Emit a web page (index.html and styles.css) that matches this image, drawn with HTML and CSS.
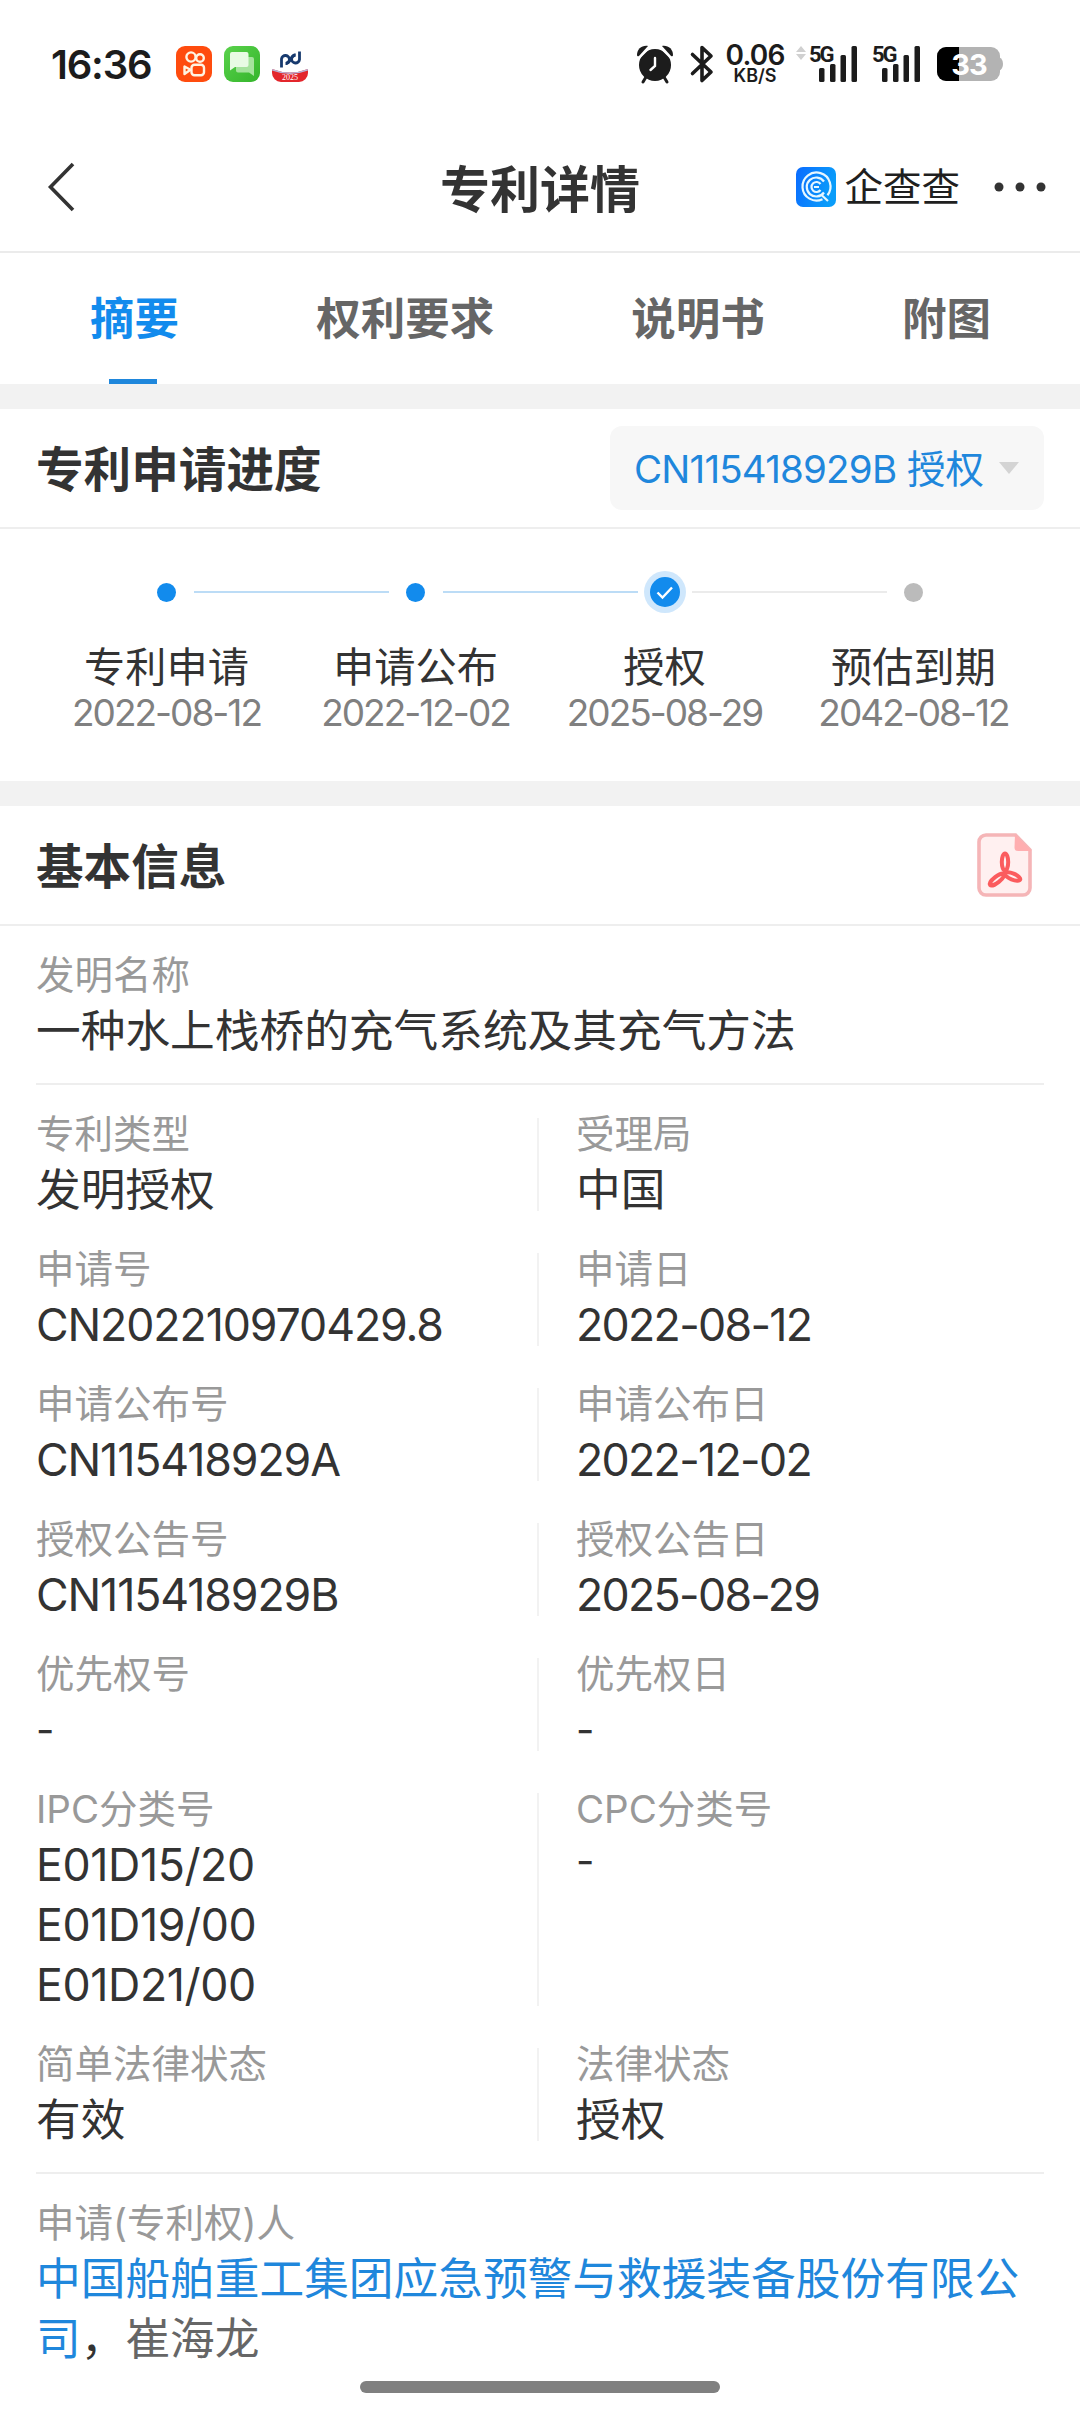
FILE: index.html
```html
<!DOCTYPE html>
<html lang="zh-CN">
<head>
  <meta charset="UTF-8" />
  <title>专利详情</title>
  <meta name="viewport" content="width=device-width, initial-scale=1.0" />
  <link rel="stylesheet" href="styles.css">
</head>
<body>
  <!-- Status bar -->
  <div class="status">
    <span class="time">16:36</span>
    <div class="apps">
      <svg width="36" height="36" viewBox="0 0 36 36">
        <rect width="36" height="36" rx="9" fill="#ff4c0e"/>
        <g fill="none" stroke="#fff4e2" stroke-width="2.4">
          <circle cx="15" cy="11" r="4.6"/>
          <circle cx="24" cy="12" r="3.8"/>
          <rect x="15.500" y="18.800" width="12.500" height="10.400" rx="3"/>
          <path d="M14.500 23.800 8.500 20.500v7.500z" stroke-linejoin="round"/>
        </g>
      </svg>
      <svg width="36" height="36" viewBox="0 0 36 36">
        <defs>
          <linearGradient id="msg" x1="0" y1="0" x2="1" y2="1">
            <stop offset="0" stop-color="#5ad24c"/>
            <stop offset="1" stop-color="#34b52b"/>
          </linearGradient>
        </defs>
        <rect width="36" height="36" rx="9" fill="url(#msg)"/>
        <path d="M14 11h14a2 2 0 0 1 2 2v17l-5-3.500H14a2 2 0 0 1-2-2V13a2 2 0 0 1 2-2z" fill="#a5e39d"/>
        <path d="M8 6h14.500a2 2 0 0 1 2 2v11a2 2 0 0 1-2 2H11l-5 3.500V8a2 2 0 0 1 2-2z" fill="#e8fbe4"/>
      </svg>
      <svg width="36" height="36" viewBox="0 0 36 36">
        <path d="M0 23q18 7 36 0v4a9 9 0 0 1-9 9H9a9 9 0 0 1-9-9z" fill="#e3262c"/>
        <path d="M0 23q18 7 36 0v1.500q-18 7-36 0z" fill="#b9b4d8"/>
        <g fill="none" stroke="#173a6e" stroke-width="2.800">
          <path d="M9.500 21.500v-8.500a4 4 0 1 1 4 4.500"/>
          <path d="M27.500 5.500v8a4 4 0 1 1-4-4.500"/>
          <path d="M14 17.500c5 0 4-8.500 9.500-8.500"/>
        </g>
        <text x="18" y="34" text-anchor="middle" class="badge-year">2025</text>
      </svg>
    </div>
    <div class="sys">
      <svg class="alarm" width="38" height="38" viewBox="0 0 38 38">
        <g fill="#1c1c1c">
          <circle cx="19" cy="20" r="16"/>
          <path d="M1 10C1 4 6 0 12 1L3 11q-2 1-2-1z"/>
          <path d="M37 10c0-6-5-10-11-9l9 10q2 1 2-1z"/>
        </g>
        <path d="M3 13 13 3M35 13 25 3" stroke="#fff" stroke-width="2"/>
        <path d="M10 32l-3 5M28 32l3 5" stroke="#1c1c1c" stroke-width="3" stroke-linecap="round"/>
        <path d="M19 13v8l-4.500 4" fill="none" stroke="#fff" stroke-width="2.400" stroke-linecap="round"/>
      </svg>
      <svg class="bt" width="24" height="38" viewBox="0 0 24 38">
        <path d="M2.500 9.500 21 27 12 35.500V2.500L21 11 2.500 28.500" fill="none" stroke="#1c1c1c" stroke-width="3.600" stroke-linejoin="round" stroke-linecap="round"/>
      </svg>
      <div class="speed">
        <span class="num">0.06</span>
        <span class="unit">KB/S</span>
      </div>
      <svg class="signal first" width="64" height="38" viewBox="0 0 64 38">
        <path d="M5 1l5 6H0zM5 15l5-6H0z" fill="#d0d0d0"/>
        <text x="13" y="17" class="net">5G</text>
        <g fill="#1c1c1c">
          <rect x="23" y="23" width="5.500" height="14" rx="1.500"/>
          <rect x="34" y="19" width="5.500" height="18" rx="1.500"/>
          <rect x="44.500" y="10" width="5.500" height="27" rx="1.500"/>
          <rect x="55.500" y="1" width="5.500" height="36" rx="1.500"/>
        </g>
      </svg>
      <svg class="signal" width="64" height="38" viewBox="0 0 64 38">
        <text x="13" y="17" class="net">5G</text>
        <g fill="#1c1c1c">
          <rect x="23" y="23" width="5.500" height="14" rx="1.500"/>
          <rect x="34" y="19" width="5.500" height="18" rx="1.500"/>
          <rect x="44.500" y="10" width="5.500" height="27" rx="1.500"/>
          <rect x="55.500" y="1" width="5.500" height="36" rx="1.500"/>
        </g>
      </svg>
      <svg class="battery" width="66" height="34" viewBox="0 0 66 34">
        <path d="M62 10q4 2 4 7t-4 7z" fill="#b3b3b3"/>
        <rect width="63" height="34" rx="9" fill="#b3b3b3"/>
        <path d="M9 0h13v34H9a9 9 0 0 1-9-9V9a9 9 0 0 1 9-9z" fill="#000"/>
        <text x="32" y="27.500" text-anchor="middle" class="level">33</text>
      </svg>
    </div>
  </div>

  <!-- Title bar -->
  <header class="navbar">
    <svg class="back" width="30" height="52" viewBox="0 0 30 52">
      <path d="M26 3 3.500 26 26 49" fill="none" stroke="#333" stroke-width="3.600"/>
    </svg>
    <h1>专利详情</h1>
    <div class="brand">
      <svg width="40" height="40" viewBox="0 0 40 40">
        <defs>
          <linearGradient id="qcc" x1="0" y1="0" x2="1" y2="0.300">
            <stop offset="0" stop-color="#0a6bff"/>
            <stop offset="1" stop-color="#0a9dfa"/>
          </linearGradient>
        </defs>
        <rect width="40" height="40" rx="7" fill="url(#qcc)"/>
        <g fill="none" stroke="#e6f6ff" stroke-width="2.200">
          <path d="M31.500 28.200A14 14 0 1 0 26.500 32.200M25.500 28l6.500 6"/>
          <path d="M28 14.500A9.500 9.500 0 1 0 28 25.500"/>
          <path d="M24.500 17a5 5 0 1 0 0 6M18 20h5"/>
        </g>
      </svg>
      <span>企查查</span>
    </div>
    <svg class="more" width="54" height="12" viewBox="0 0 54 12">
      <g fill="#333">
        <circle cx="6" cy="6" r="4.500"/>
        <circle cx="27" cy="6" r="4.500"/>
        <circle cx="48" cy="6" r="4.500"/>
      </g>
    </svg>
  </header>

  <nav class="tabs">
    <a class="tab active">摘要</a>
    <a class="tab">权利要求</a>
    <a class="tab">说明书</a>
    <a class="tab">附图</a>
  </nav>

  <!-- Progress -->
  <section class="card">
    <div class="card-head">
      <h2>专利申请进度</h2>
      <div class="select">
        <span><span class="code">CN115418929B</span> 授权</span>
        <i class="caret"></i>
      </div>
    </div>
    <div class="steps">
      <div class="step done">
        <div class="mark"><i class="dot"></i></div>
        <div class="name">专利申请</div>
        <div class="date">2022-08-12</div>
      </div>
      <div class="step done">
        <div class="mark"><i class="dot"></i></div>
        <div class="name">申请公布</div>
        <div class="date">2022-12-02</div>
      </div>
      <div class="step current">
        <div class="mark">
          <svg width="42" height="42" viewBox="0 0 42 42">
            <circle cx="21" cy="21" r="21" fill="#cfe7fc"/>
            <circle cx="21" cy="21" r="15" fill="#128bed"/>
            <path d="M13.500 21.500l5 5 9.500-10" fill="none" stroke="#fff" stroke-width="2.400"/>
          </svg>
        </div>
        <div class="name">授权</div>
        <div class="date">2025-08-29</div>
      </div>
      <div class="step">
        <div class="mark"><i class="dot"></i></div>
        <div class="name">预估到期</div>
        <div class="date">2042-08-12</div>
      </div>
    </div>
  </section>

  <!-- Basic info -->
  <section class="card">
    <div class="card-head">
      <h2>基本信息</h2>
      <svg class="pdf" width="56" height="64" viewBox="0 0 56 64">
        <path d="M9 2h29.500L53 17v38a7 7 0 0 1-7 7H9a7 7 0 0 1-7-7V9a7 7 0 0 1 7-7z" fill="#fff0f0" stroke="#f5b5b7" stroke-width="3.600"/>
        <path d="M38 1.500 54.500 18H41a3.500 3.500 0 0 1-3.500-3.500z" fill="#ffaeb0"/>
        <g fill="none" stroke="#fb5c5e" stroke-width="4">
          <ellipse cx="28" cy="29" rx="3.200" ry="8.500"/>
          <ellipse cx="20" cy="46.500" rx="8.800" ry="3" transform="rotate(-38 20 46.500)"/>
          <ellipse cx="35.500" cy="43.500" rx="8.300" ry="3" transform="rotate(22 35.500 43.500)"/>
        </g>
      </svg>
    </div>

    <div class="block">
      <div class="label">发明名称</div>
      <div class="value">一种水上栈桥的充气系统及其充气方法</div>
    </div>

    <div class="block grid">
      <div class="row">
        <div class="cell"><div class="label">专利类型</div><div class="value">发明授权</div></div>
        <div class="cell"><div class="label">受理局</div><div class="value">中国</div></div>
      </div>
      <div class="row">
        <div class="cell"><div class="label">申请号</div><div class="value num">CN202210970429.8</div></div>
        <div class="cell"><div class="label">申请日</div><div class="value day">2022-08-12</div></div>
      </div>
      <div class="row">
        <div class="cell"><div class="label">申请公布号</div><div class="value num">CN115418929A</div></div>
        <div class="cell"><div class="label">申请公布日</div><div class="value day">2022-12-02</div></div>
      </div>
      <div class="row">
        <div class="cell"><div class="label">授权公告号</div><div class="value num">CN115418929B</div></div>
        <div class="cell"><div class="label">授权公告日</div><div class="value day">2025-08-29</div></div>
      </div>
      <div class="row">
        <div class="cell"><div class="label">优先权号</div><div class="value none">-</div></div>
        <div class="cell"><div class="label">优先权日</div><div class="value none">-</div></div>
      </div>
      <div class="row">
        <div class="cell">
          <div class="label">IPC分类号</div>
          <div class="value ipc">E01D15/20<br>E01D19/00<br>E01D21/00</div>
        </div>
        <div class="cell"><div class="label">CPC分类号</div><div class="value none cpc">-</div></div>
      </div>
      <div class="row">
        <div class="cell"><div class="label">简单法律状态</div><div class="value">有效</div></div>
        <div class="cell"><div class="label">法律状态</div><div class="value">授权</div></div>
      </div>
    </div>

    <div class="block last">
      <div class="label">申请(专利权)人</div>
      <div class="value"><a class="link">中国船舶重工集团应急预警与救援装备股份有限公司</a>，<span class="person">崔海龙</span></div>
    </div>
  </section>

  <div class="home-bar"></div>
</body>
</html>
```
FILE: styles.css
```css
* {
  box-sizing: border-box;
  margin: 0;
  padding: 0;
}

body {
  width: 1080px;
  height: 2414px;
  overflow: hidden;
  background-color: #fff;
  color: #333;
  font-family: Inter, "Noto Sans CJK SC", sans-serif;
}

svg {
  display: block;
  flex-shrink: 0;
  overflow: visible;
}

/* Status bar */
.status {
  height: 126px;
  padding: 2px 77px 0 51px;
  display: flex;
  align-items: center;
  color: #1c1c1c;
}

.time {
  width: 125px;
  font-size: 40px;
  font-weight: 600;
  letter-spacing: -1.200px;
}

.apps {
  display: flex;
  gap: 12px;
}

.badge-year {
  font-family: "Liberation Serif", serif;
  font-size: 8px;
  fill: #fff;
}

.sys {
  margin-left: auto;
  display: flex;
  align-items: center;
}

.bt {
  margin-left: 16px;
}

.speed {
  width: 66px;
  margin-left: 8px;
  text-align: center;
  font-weight: 600;
}

.speed span {
  display: block;
}

.speed .num {
  font-size: 28px;
  line-height: 23px;
  letter-spacing: -0.800px;
}

.speed .unit {
  font-size: 18px;
  line-height: 18px;
}

.signal {
  margin-left: -1px;
}

.signal.first {
  margin-left: 8px;
}

.net {
  font-family: Roboto, sans-serif;
  font-size: 22px;
  font-weight: 700;
  letter-spacing: -2px;
  fill: #1c1c1c;
}

.battery {
  margin-left: 14px;
}

.level {
  font-size: 29px;
  font-weight: 700;
  letter-spacing: -1px;
  fill: #fff;
}

/* Title bar */
.navbar {
  height: 127px;
  padding: 0 33px 3px 47px;
  display: flex;
  align-items: center;
  border-bottom: 2px solid #ebebeb;
}

.navbar h1 {
  margin: 5px 0 0 363px;
  font-size: 50px;
  font-weight: 700;
  line-height: 60px;
}

.brand {
  margin-left: auto;
  display: flex;
  align-items: center;
  gap: 8px;
  color: #1f1f1f;
  font-size: 38.500px;
  line-height: 40px;
}

.more {
  margin-left: 33px;
}

.tabs {
  height: 131px;
  padding: 0 89px 0 90px;
  display: flex;
  justify-content: space-between;
}

.tab {
  position: relative;
  font-size: 44.500px;
  font-weight: 700;
  line-height: 132px;
  color: #666;
}

.tab.active {
  color: #128bed;
}

.tab.active::after {
  content: "";
  position: absolute;
  left: 50%;
  bottom: 0;
  width: 48px;
  height: 5px;
  margin-left: -26px;
  background-color: #1f87dc;
}

/* Cards */
.card {
  border-top: 25px solid #f2f2f2;
}

.card-head {
  height: 120px;
  padding: 0 36px;
  display: flex;
  align-items: center;
  justify-content: space-between;
  border-bottom: 2px solid #eee;
}

.card-head h2 {
  margin-bottom: 4px;
  font-size: 47.600px;
  font-weight: 700;
}

.select {
  width: 434px;
  height: 84px;
  padding: 0 25px 4px 24px;
  display: flex;
  align-items: center;
  justify-content: space-between;
  border-radius: 12px;
  background-color: #f7f7f7;
  color: #1f87dc;
  font-size: 38.500px;
  white-space: nowrap;
}

.code {
  letter-spacing: -0.800px;
}

.caret {
  margin-top: 3px;
  border: 10px solid transparent;
  border-top: 12px solid #d4d4d4;
  border-bottom: 0;
}

.steps {
  height: 252px;
  padding: 42px 42px 0;
  display: flex;
}

.step {
  position: relative;
  flex: 1;
  text-align: center;
}

/* line between this step and the next one */
.step:not(:last-child)::after {
  content: "";
  position: absolute;
  top: 20px;
  left: calc(50% + 27px);
  width: 195px;
  height: 2px;
  background-color: #ebebeb;
}

.step.done::after {
  background-color: #bcdcf6;
}

.mark {
  height: 42px;
  display: flex;
  align-items: center;
  justify-content: center;
}

.dot {
  width: 19px;
  height: 19px;
  border-radius: 50%;
  background-color: #bbb;
}

.done .dot {
  background-color: #128bed;
}

.name {
  margin-top: 30px;
  font-size: 41.200px;
  line-height: 48px;
}

.date {
  color: #808080;
  font-size: 37px;
  line-height: 44px;
  letter-spacing: -2px;
}

.pdf {
  margin-right: 11px;
}

/* Info */
.block {
  margin: 0 36px;
  padding: 33px 0 31px;
  border-bottom: 2px solid #eee;
}

.label {
  height: 33px;
  color: #999;
  font-size: 38.500px;
  line-height: 33px;
}

.value {
  margin-top: 9px;
  margin-bottom: -9px;
  font-size: 44.700px;
  line-height: 60px;
}

.value.num {
  letter-spacing: -1.100px;
}

.value.day {
  letter-spacing: -1.700px;
}

.value.ipc {
  letter-spacing: -0.400px;
}

.value.none {
  font-size: 40px;
}

.grid {
  display: flex;
  flex-direction: column;
  gap: 42px;
}

.row {
  display: flex;
}

.cell {
  width: 503px;
  border-right: 2px solid #f2f2f2;
}

.cell + .cell {
  padding-left: 37px;
  border-right: 0;
}

.value.cpc {
  margin-top: 5px;
}

.block.last {
  border-bottom: 0;
}

.link {
  color: #1f87dc;
}

.person {
  color: #666;
}

/* Gesture bar */
.home-bar {
  position: fixed;
  left: 360px;
  bottom: 21px;
  width: 360px;
  height: 12px;
  border-radius: 6px;
  background-color: #808080;
}
```
